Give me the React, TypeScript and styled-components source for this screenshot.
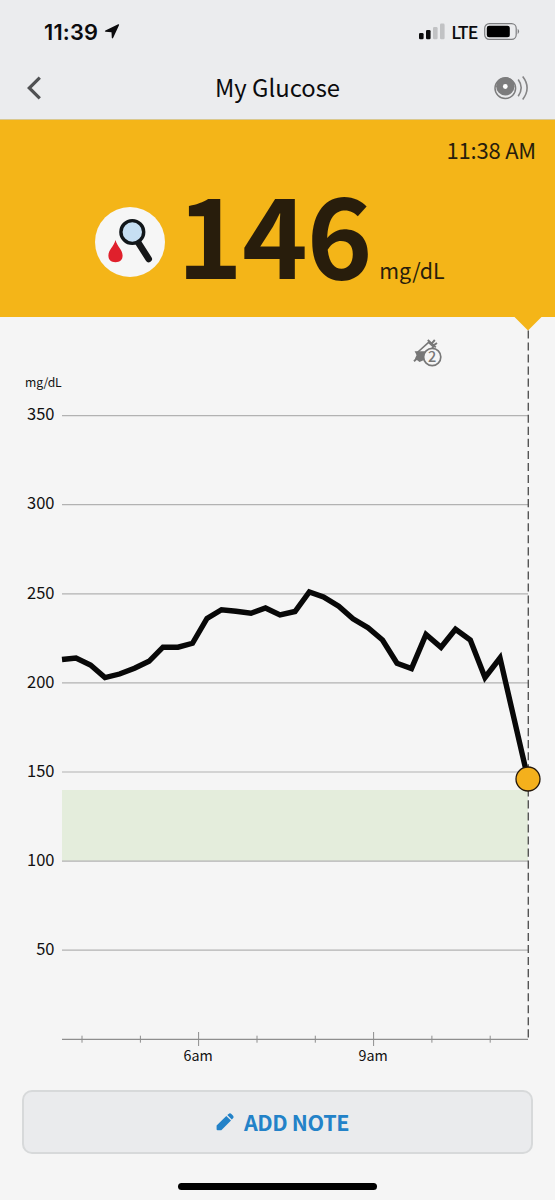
import React from "react";
import styled, { createGlobalStyle } from "styled-components";

const GlobalStyle = createGlobalStyle`
  *, *::before, *::after { box-sizing: border-box; }
  body { margin: 0; background: #f5f5f5; }
`;

const sans = `"Noto Sans CJK SC", "Open Sans", sans-serif`;

const Screen = styled.main`
  width: 555px;
  height: 1200px;
  display: flex;
  flex-direction: column;
  overflow: hidden;
  background: #f5f5f5;
  color: #0b0b0d;
  font-family: ${sans};
`;

const StatusBar = styled.header`
  height: 60px;
  padding: 3px 35px 0 44px;
  display: flex;
  align-items: center;
  justify-content: space-between;
  background: #ebecee;
`;

const StatusGroup = styled.div<{ $gap: number }>`
  display: flex;
  align-items: center;
  gap: ${(p) => p.$gap}px;
`;

const Clock = styled.span`
  font: 600 21.8px/26px Inter, sans-serif;
  letter-spacing: 0.2px;
`;

const Carrier = styled.span`
  margin-bottom: 2px;
  font-size: 17.8px;
  font-weight: 500;
  line-height: 26px;
  letter-spacing: -0.9px;
`;

const NavBar = styled.nav`
  height: 60px;
  padding: 0 26px 4px;
  display: grid;
  grid-template-columns: 40px 1fr 40px;
  align-items: center;
  background: #ebecee;
  border-bottom: 1px solid #d9c88f;
`;

const NavButton = styled.button<{ $end?: boolean }>`
  display: flex;
  justify-content: ${(p) => (p.$end ? "flex-end" : "flex-start")};
  padding: 0;
  border: 0;
  background: none;
`;

const Title = styled.h1`
  margin: 0 0 2px;
  text-align: center;
  font-size: 23.8px;
  font-weight: 400;
  line-height: 36px;
`;

const Reading = styled.section`
  height: 197px;
  padding: 12px 19px 0 95px;
  display: flex;
  flex-direction: column;
  background: #f4b518;
  color: #281d0c;
`;

const ReadingTime = styled.time`
  align-self: flex-end;
  font-size: 22px;
  line-height: 34px;
  letter-spacing: -0.2px;
`;

const ReadingRow = styled.div`
  display: flex;
  align-items: flex-start;
  margin-top: 10px;
  height: 110px;
`;

const Badge = styled.div`
  width: 70px;
  height: 70px;
  margin-top: 31px;
  border-radius: 50%;
  background: #f6f6f6;
`;

const ValueGroup = styled.div`
  display: flex;
  align-items: baseline;
  margin-left: 12px;
`;

const Value = styled.strong`
  font-size: 111.5px;
  line-height: 110px;
  font-weight: 700;
  letter-spacing: -0.9px;
`;

const Unit = styled.span`
  margin-left: 7.5px;
  font-size: 21.4px;
  line-height: 34px;
`;

const ChartArea = styled.section`
  height: 773px;
  svg { display: block; }
  text { font-family: ${sans}; fill: #111; }
`;

const Footer = styled.footer`
  display: flex;
  flex-direction: column;
  align-items: center;
  padding: 0 22px;
`;

const NoteButton = styled.button`
  width: 100%;
  height: 64px;
  padding: 0 0 0 10px;
  display: flex;
  align-items: center;
  justify-content: center;
  gap: 10px;
  border: 2px solid #d7d9da;
  border-radius: 10px;
  background: #eaebed;
  color: #2382c8;
  font: 700 21.5px/32px ${sans};
  letter-spacing: -0.35px;
  svg { margin-bottom: 1px; }
`;

const HomeIndicator = styled.div`
  width: 199px;
  height: 7px;
  margin-top: 29px;
  border-radius: 4px;
  background: #000;
`;

const LocationIcon = () => (
  <svg width="16" height="17" viewBox="0 0 16 17">
    <path d="M14.2 1.2Q15.5.9 15 2.2L9.2 14.8Q8.2 16.3 7.8 14.8L7.5 9.2 1.6 8.8Q.1 8.3 1.4 7.4Z" fill="#0b0b0d" />
  </svg>
);

const SignalIcon = () => (
  <svg width="26" height="17" viewBox="0 0 26 17">
    <rect x="0" y="10" width="4.6" height="6.3" rx="1.3" fill="#0b0b0d" />
    <rect x="7" y="7" width="4.6" height="9.3" rx="1.3" fill="#0b0b0d" />
    <rect x="14" y="4" width="4.6" height="12.3" rx="1.3" fill="#c1c2c4" />
    <rect x="21" y="0.6" width="4.6" height="15.7" rx="1.3" fill="#c1c2c4" />
  </svg>
);

const BatteryIcon = () => (
  <svg width="36" height="17" viewBox="0 0 36 17">
    <rect x="0.7" y="0.7" width="31.5" height="15.6" rx="4.6" fill="none" stroke="#7d7e80" strokeWidth="1.2" />
    <rect x="2.8" y="2.7" width="23" height="11.6" rx="2.4" fill="#000" />
    <path d="M33.7 5.8Q36.5 8.5 33.7 11.2Z" fill="#7d7e80" />
  </svg>
);

const BackIcon = () => (
  <svg width="16" height="24" viewBox="0 0 16 24">
    <path d="M13.8 1.7 3.3 12 13.8 22.3" fill="none" stroke="#505153" strokeWidth="3.2" />
  </svg>
);

const SensorIcon = () => (
  <svg width="36" height="26" viewBox="0 0 36 26">
    <circle cx="12.3" cy="13.2" r="10.3" fill="none" stroke="#7c7c7d" strokeWidth="1.5" />
    <circle cx="12.3" cy="11.3" r="9.2" fill="#7c7c7d" />
    <circle cx="12.3" cy="11.5" r="2.4" fill="#fff" />
    <path d="M25.2 4.5Q31.2 12.8 25.2 21.2M29.7 1.5Q38.5 12.8 29.7 24.4" fill="none" stroke="#858586" strokeWidth="1.6" />
  </svg>
);

const BloodTestIcon = () => (
  <svg width="70" height="70" viewBox="0 0 70 70">
    <path d="M43.5 36 53.7 52" stroke="#161719" strokeWidth="6.6" strokeLinecap="round" />
    <circle cx="37.3" cy="25" r="11.4" fill="#c6dff3" stroke="#11161a" strokeWidth="3.4" />
    <path d="M20.5 33C22 39.5 27.6 42.5 27.6 48.5C27.6 53 25 55.2 20.5 55.2S13.4 53 13.4 48.5C13.4 42.5 19 39.5 20.5 33Z" fill="#e0202c" />
  </svg>
);

const PencilIcon = () => (
  <svg width="18" height="18" viewBox="0 0 18 18">
    <path d="M.6 12.5 10.3 3 15 7.6 5.3 17.2H1.6Q.6 17.2.6 16.2ZM11.3 2.1 12.6.9Q14-.3 15.4.9L16.9 2.4Q18.2 3.9 17 5.3L15.8 6.6Z" fill="#2382c8" />
  </svg>
);

const InsulinNote = () => (
  <g>
    <path d="M414 361.2 418.5 357M427.8 340 435.8 347.4M431.8 343.4 434.8 340M433.6 345.4 437 343" stroke="#777" strokeWidth="1.9" fill="none" />
    <path d="M416.8 353 428.6 342.4 433.5 346.8 425.5 355 420 360Z" fill="#f5f5f5" stroke="#777" strokeWidth="1.6" />
    <path d="M414.6 351.2H426.5L424 360 419.5 362 415 358.4 416.6 355Z" fill="#777" />
    <circle cx="432.2" cy="357" r="8.6" fill="#f5f5f5" stroke="#777" strokeWidth="1.7" />
    <text x="432.2" y="362" textAnchor="middle" fontSize="14.5" fontWeight="500" style={{ fill: "#777" }}>2</text>
  </g>
);

const LEFT = 62;
const NOW = 528;
const yOf = (mgdl: number) => 1039.3 - mgdl * 1.782;
const levels = [350, 300, 250, 200, 150, 100, 50];
const minorTicks = [82, 140.4, 257, 315.3, 431.9, 490.2];
const hours = [
  { x: 198.6, label: "6am" },
  { x: 373.6, label: "9am" },
];
const trace = [
  [62, 659.5], [76, 658], [90.5, 665], [105, 677.5], [119.5, 674], [134.5, 668.3],
  [149, 661.3], [163, 647.2], [178, 647.2], [192.5, 643.3], [207, 618.5], [221.5, 609.7],
  [236, 611.3], [251, 613.3], [265.5, 608], [280, 615], [295, 611.5], [309.3, 592],
  [323.5, 597], [338.7, 606.3], [353, 618.7], [368, 627.8], [382.5, 640], [397, 663.3],
  [411.5, 668.6], [426, 634.5], [441, 647.3], [455.5, 629.3], [470.3, 640], [485, 677.5],
  [500, 658], [528, 779],
];

const GlucoseChart = () => (
  <svg width="555" height="773" viewBox="0 317 555 773">
    <path d="M514.5 317H541.5L528 330.5Z" fill="#f4b518" />
    <text x="25" y="387.4" fontSize="12.2" letterSpacing="-0.15">mg/dL</text>
    <rect x={LEFT} y="790" width={NOW - LEFT} height="71" fill="#e4eddc" />
    {levels.map((v) => (
      <g key={v}>
        <line x1={LEFT} x2={NOW} y1={yOf(v)} y2={yOf(v)} stroke="#b2b2b2" strokeWidth="1.2" />
        <text x="54.5" y={yOf(v) + 4.7} fontSize="16.5" textAnchor="end">{v}</text>
      </g>
    ))}
    <line x1={LEFT} x2={NOW} y1="1039.3" y2="1039.3" stroke="#8e8e8e" strokeWidth="1.2" />
    {minorTicks.map((x) => (
      <line key={x} x1={x} x2={x} y1="1035.7" y2="1042.7" stroke="#8e8e8e" />
    ))}
    {hours.map(({ x, label }) => (
      <g key={label}>
        <line x1={x} x2={x} y1="1032" y2="1046" stroke="#8e8e8e" />
        <text x={x - 0.5} y="1061" fontSize="14.3" textAnchor="middle">{label}</text>
      </g>
    ))}
    <line x1={NOW + 0.3} x2={NOW + 0.3} y1="330.4" y2="1038" stroke="#555" strokeWidth="1.4" strokeDasharray="8.1 3.95" />
    <polyline points={trace.map((p) => p.join(",")).join(" ")} fill="none" stroke="#080808" strokeWidth="5.4" />
    <circle cx={NOW} cy="779" r="12" fill="#f4b01c" stroke="#24180c" strokeWidth="1.3" />
    <InsulinNote />
  </svg>
);

export default function App() {
  return (
    <Screen>
      <GlobalStyle />
      <StatusBar>
        <StatusGroup $gap={5.5}>
          <Clock>11:39</Clock>
          <LocationIcon />
        </StatusGroup>
        <StatusGroup $gap={6.5}>
          <SignalIcon />
          <Carrier>LTE</Carrier>
          <BatteryIcon />
        </StatusGroup>
      </StatusBar>
      <NavBar>
        <NavButton aria-label="Back"><BackIcon /></NavButton>
        <Title>My Glucose</Title>
        <NavButton $end aria-label="Scan sensor"><SensorIcon /></NavButton>
      </NavBar>
      <Reading>
        <ReadingTime>11:38 AM</ReadingTime>
        <ReadingRow>
          <Badge><BloodTestIcon /></Badge>
          <ValueGroup>
            <Value>146</Value>
            <Unit>mg/dL</Unit>
          </ValueGroup>
        </ReadingRow>
      </Reading>
      <ChartArea><GlucoseChart /></ChartArea>
      <Footer>
        <NoteButton><PencilIcon />ADD NOTE</NoteButton>
        <HomeIndicator />
      </Footer>
    </Screen>
  );
}
